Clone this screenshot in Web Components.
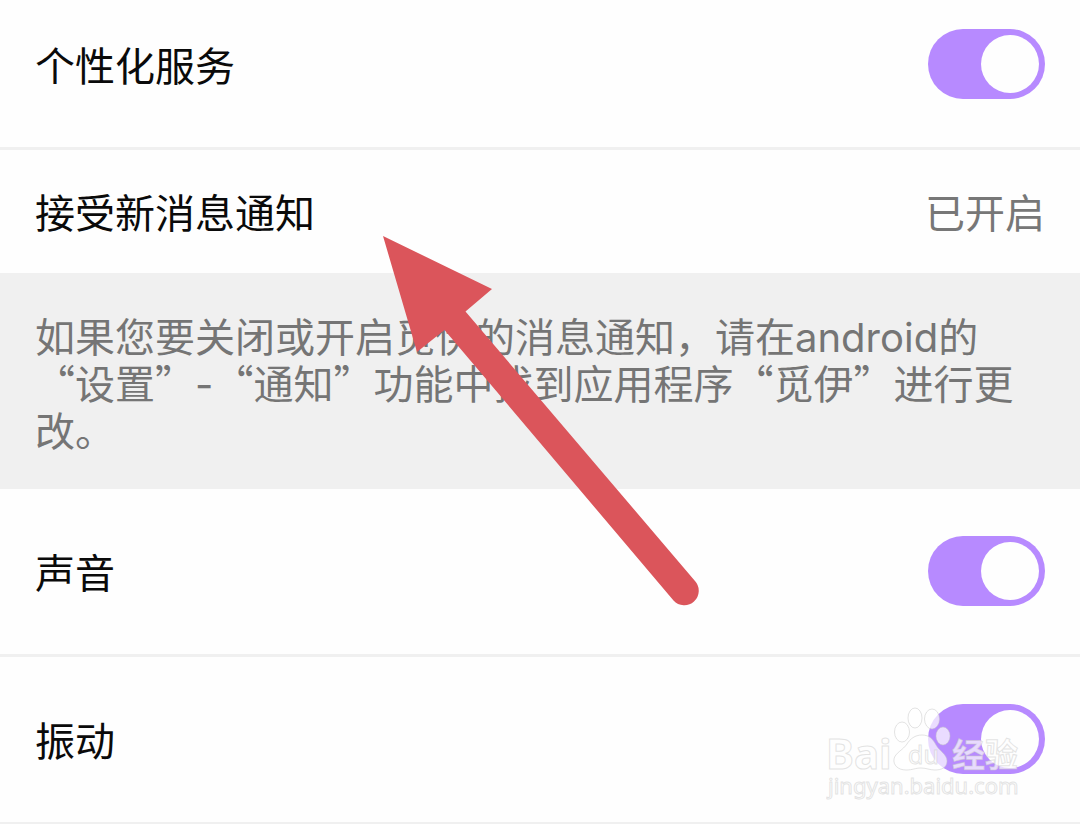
<!DOCTYPE html>
<html lang="zh-CN">
<head>
<meta charset="UTF-8">
<meta name="viewport" content="width=device-width, initial-scale=1">
<title>消息通知</title>
<style>
  body {
    margin: 0;
    background: #fefefe;
    color: #0a0a0a;
    font-family: "Noto Sans CJK SC", sans-serif;
    font-size: 40px;
    line-height: 47px;
  }
</style>
</head>
<body>
<settings-page>
  <setting-row class="first" label="个性化服务"><toggle-switch label="个性化服务" checked></toggle-switch></setting-row>
  <setting-row class="compact" label="接受新消息通知">已开启</setting-row>
  <setting-note>如果您要关闭或开启觅伊的消息通知，请在<span class="latin">android</span>的“设置”<span class="latin">-</span>“通知”功能中找到应用程序“觅伊”进行更改。</setting-note>
  <setting-row label="声音"><toggle-switch label="声音" checked></toggle-switch></setting-row>
  <setting-row label="振动"><toggle-switch label="振动" checked></toggle-switch></setting-row>
  <pointer-arrow slot="overlay"></pointer-arrow>
  <baidu-mark slot="overlay"></baidu-mark>
</settings-page>

<script>
class SettingsPage extends HTMLElement {
  constructor() {
    super();
    this.attachShadow({ mode: 'open' }).innerHTML = `
      <style>
        :host {
          display: block;
          position: relative;
          overflow: hidden;
        }

        main {
          display: flex;
          flex-direction: column;
        }
      </style>
      <main><slot></slot></main>
      <slot name="overlay"></slot>
    `;
  }
}

class SettingRow extends HTMLElement {
  constructor() {
    super();
    this.attachShadow({ mode: 'open' }).innerHTML = `
      <style>
        :host {
          display: flex;
          align-items: center;
          justify-content: space-between;
          padding: 47px 35px 48px;
          border-bottom: 3px solid #f0f0f0;
        }

        /* The top row is partly scrolled away */
        :host(.first) {
          padding-top: 29px;
        }

        /* Text-only row, sits directly on the note below it */
        :host(.compact) {
          padding-top: 38px;
          padding-bottom: 38px;
          border-bottom: none;
        }

        .value {
          display: flex;
          color: #777777;
        }
      </style>
      <span class="label"></span>
      <span class="value"><slot></slot></span>
    `;
  }

  connectedCallback() {
    this.shadowRoot.querySelector('.label').textContent = this.getAttribute('label');
  }
}

class SettingNote extends HTMLElement {
  constructor() {
    super();
    this.attachShadow({ mode: 'open' }).innerHTML = `
      <style>
        :host {
          display: block;
          padding: 39px 35px 36px;
          background: #f0f0f0;
          color: #757575;
          text-spacing-trim: space-all;
        }

        p {
          margin: 0;
        }

        ::slotted(.latin) {
          font-family: Inter, sans-serif;
          line-height: 1;
        }
      </style>
      <p><slot></slot></p>
    `;
  }
}

class ToggleSwitch extends HTMLElement {
  constructor() {
    super();
    this.attachShadow({ mode: 'open' }).innerHTML = `
      <style>
        :host {
          display: block;
        }

        input {
          appearance: none;
          display: flex;
          align-items: center;
          box-sizing: border-box;
          width: 117px;
          height: 70px;
          margin: 0;
          padding: 0 6px;
          border-radius: 35px;
          background: #d8d8d8;
          cursor: pointer;
        }

        input::before {
          content: "";
          width: 58px;
          height: 58px;
          border-radius: 50%;
          background: #fefefe;
        }

        input:checked {
          justify-content: flex-end;
          background: #b78aff;
        }
      </style>
      <input type="checkbox" role="switch">
    `;
  }

  connectedCallback() {
    const input = this.shadowRoot.querySelector('input');
    input.checked = this.hasAttribute('checked');
    input.setAttribute('aria-label', this.getAttribute('label'));
  }
}

class PointerArrow extends HTMLElement {
  constructor() {
    super();
    this.attachShadow({ mode: 'open' }).innerHTML = `
      <style>
        :host {
          position: absolute;
          left: 383px;
          top: 236px;
          pointer-events: none;
        }

        svg {
          display: block;
        }
      </style>
      <svg width="317" height="370" viewBox="0 0 317 370" aria-hidden="true">
        <path fill="#db555b" d="M0 0 L109 53 L82.500 75.500 L312 345 A14.500 14.500 0 0 1 290.500 364.500 L61.500 94 L34 116 Z"/>
      </svg>
    `;
  }
}

class BaiduMark extends HTMLElement {
  constructor() {
    super();
    this.attachShadow({ mode: 'open' }).innerHTML = `
      <style>
        :host {
          position: absolute;
          right: 52px;
          bottom: 20px;
          pointer-events: none;
        }

        svg {
          display: block;
          font-family: "Noto Sans", sans-serif;
          fill: rgba(255, 255, 255, 0.7);
          stroke: rgba(200, 200, 200, 0.5);
          stroke-width: 1;
        }

        .bold {
          font-weight: bold;
        }

        .cjk {
          font-family: "Noto Sans CJK SC", sans-serif;
        }
      </style>
      <svg width="202" height="102" viewBox="0 0 202 102" aria-hidden="true">
        <text class="bold" x="0" y="66" font-size="42">Bai</text>
        <ellipse cx="76" cy="29" rx="7.500" ry="10"/>
        <ellipse cx="89" cy="15" rx="7" ry="10"/>
        <ellipse cx="106" cy="16" rx="7.500" ry="10"/>
        <ellipse cx="117" cy="33" rx="7" ry="9"/>
        <path d="M96 32 C103 32 107 36 110 42 C113 48 121 51 121 58 C121 65 115 67 109 67 C103 67 101 65 95 65 C89 65 87 67 80 67 C72 67 67 62 68 56 C69 50 77 47 81 41 C84 36 89 32 96 32 Z"/>
        <text x="82" y="61" font-size="25">du</text>
        <text class="bold cjk" x="126" y="64" font-size="33">经验</text>
        <text x="2" y="91" font-size="22">jingyan.baidu.com</text>
      </svg>
    `;
  }
}

customElements.define('settings-page', SettingsPage);
customElements.define('setting-row', SettingRow);
customElements.define('setting-note', SettingNote);
customElements.define('toggle-switch', ToggleSwitch);
customElements.define('pointer-arrow', PointerArrow);
customElements.define('baidu-mark', BaiduMark);
</script>
</body>
</html>
